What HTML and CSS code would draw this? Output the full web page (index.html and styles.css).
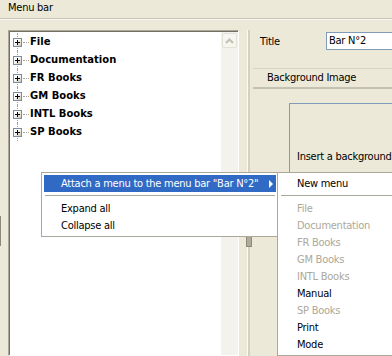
FILE: index.html
```html
<!DOCTYPE html>
<html>
<head>
<meta charset="utf-8">
<link rel="stylesheet" href="styles.css">
</head>
<body>
<div class="win">
  <div class="caption">Menu bar</div>
  <div class="main">
    <div class="gutter"><div class="grip"></div></div>
    <div class="tree-panel">
      <div class="tree">
        <div class="node"><span class="pb"></span><span class="dash"></span><span class="lbl">File</span></div>
        <div class="node"><span class="pb"></span><span class="dash"></span><span class="lbl">Documentation</span></div>
        <div class="node"><span class="pb"></span><span class="dash"></span><span class="lbl">FR Books</span></div>
        <div class="node"><span class="pb"></span><span class="dash"></span><span class="lbl">GM Books</span></div>
        <div class="node"><span class="pb"></span><span class="dash"></span><span class="lbl">INTL Books</span></div>
        <div class="node"><span class="pb"></span><span class="dash"></span><span class="lbl">SP Books</span></div>
      </div>
      <div class="vscroll">
        <div class="sb-up"><svg width="9" height="6" viewBox="0 0 9 6"><path d="M1 5 L4.5 1.5 L8 5" fill="none" stroke="#c3c0b4" stroke-width="2"/></svg></div>
      </div>
    </div>
    <div class="splitter"><div class="split-line"></div><div class="split-thumb"></div></div>
    <div class="props">
      <div class="title-row"><span class="field-label">Title</span><div class="input">Bar N°2</div></div>
      <div class="section">Background Image</div>
      <div class="imgbox"><div class="imgtext">Insert a background image</div></div>
    </div>
  </div>

  <div class="menu ctx">
    <div class="item active has-sub">Attach a menu to the menu bar "Bar N°2"</div>
    <div class="sep"></div>
    <div class="item">Expand all</div>
    <div class="item">Collapse all</div>
  </div>

  <div class="menu sub">
    <div class="item">New menu</div>
    <div class="sep"></div>
    <div class="item disabled">File</div>
    <div class="item disabled">Documentation</div>
    <div class="item disabled">FR Books</div>
    <div class="item disabled">GM Books</div>
    <div class="item disabled">INTL Books</div>
    <div class="item">Manual</div>
    <div class="item disabled">SP Books</div>
    <div class="item">Print</div>
    <div class="item">Mode</div>
  </div>
</div>
</body>
</html>
```

FILE: styles.css
```css
html, body {
  margin: 0;
  padding: 0;
}
body {
  background: #ece9d8;
  font-family: "DejaVu Sans Condensed", "Liberation Sans", sans-serif;
  font-size: 11px;
  letter-spacing: -0.25px;
  color: #000;
}
.win {
  position: relative;
  width: 392px;
  height: 356px;
  overflow: hidden;
}
.caption {
  height: 18px;
  line-height: 16px;
  padding-left: 8px;
  border-bottom: 1px solid #c9c6b6;
  box-shadow: 0 1px 0 #f7f6f0;
}
.main {
  display: flex;
  margin-top: 11px;
  height: 326px;
}
.gutter {
  width: 8px;
  flex: none;
}
.grip {
  margin-top: 186px;
  width: 1px;
  height: 30px;
  background: #8c897b;
}
.tree-panel {
  width: 231px;
  flex: none;
  box-sizing: border-box;
  display: flex;
  border: 1px solid;
  border-color: #aca899 #fff #fff #aca899;
  box-shadow: inset 1px 1px 0 #716f64;
  padding: 1px 0 0 1px;
}
.tree {
  width: 211px;
  background: #fff;
  padding-top: 1px;
  font-family: "DejaVu Sans", sans-serif;
  font-size: 10px;
  letter-spacing: 0;
  font-weight: bold;
}
.node {
  display: flex;
  align-items: center;
  height: 18px;
  line-height: 18px;
  position: relative;
}
.node::before {
  content: "";
  position: absolute;
  left: 7px;
  top: 0;
  bottom: 0;
  border-left: 1px dotted #a3a3a3;
}
.pb {
  position: relative;
  z-index: 1;
  width: 9px;
  height: 9px;
  box-sizing: border-box;
  margin-left: 3px;
  border: 1px solid #7f8d9a;
  background: linear-gradient(135deg, #ffffff 35%, #c9c5b6);
}
.pb::before {
  content: "";
  position: absolute;
  left: 1px;
  top: 3px;
  width: 5px;
  height: 1px;
  background: #000;
}
.pb::after {
  content: "";
  position: absolute;
  left: 3px;
  top: 1px;
  width: 1px;
  height: 5px;
  background: #000;
}
.dash {
  width: 6px;
  margin-left: 1px;
  border-top: 1px dotted #a3a3a3;
}
.lbl {
  margin-left: 1px;
}
.vscroll {
  width: 17px;
  background: #f3f2ec;
}
.sb-up {
  box-sizing: border-box;
  width: 15px;
  height: 15px;
  margin: 1px 1px 0 1px;
  border: 1px solid #e3e0d4;
  border-radius: 2px;
  background: #f7f6f1;
  display: flex;
  align-items: center;
  justify-content: center;
}
.splitter {
  width: 14px;
  flex: none;
  position: relative;
  display: flex;
  flex-direction: column;
}
.split-line {
  position: absolute;
  left: 8px;
  top: 0;
  bottom: 0;
  width: 2px;
  border-left: 1px solid #fbfaf6;
  background: #d4d1c2;
}
.split-thumb {
  position: relative;
  margin-top: 202px;
  margin-left: 7px;
  width: 6px;
  height: 15px;
  box-sizing: border-box;
  background: #aeab9c;
  border: 1px solid #8d8a7c;
}
.props {
  flex: 1;
  min-width: 0;
  padding-top: 2px;
}
.title-row {
  display: flex;
  align-items: center;
  height: 18px;
}
.field-label {
  width: 73px;
  padding-left: 7px;
  box-sizing: border-box;
  flex: none;
}
.input {
  flex: none;
  width: 120px;
  height: 18px;
  box-sizing: border-box;
  border: 1px solid #7f9db9;
  background: #fff;
  padding-left: 2px;
  line-height: 16px;
  white-space: nowrap;
}
.section {
  margin-top: 18px;
  height: 18px;
  line-height: 18px;
  padding-left: 14px;
  border-top: 1px solid #d8d5c8;
  border-bottom: 2px solid #c5c2b3;
  white-space: nowrap;
}
.imgbox {
  margin: 14px 0 0 36px;
  width: 200px;
  height: 150px;
  border: 1px solid #7f9db9;
  box-sizing: border-box;
}
.imgtext {
  padding: 44px 0 0 7px;
  line-height: 18px;
  white-space: nowrap;
}
.menu {
  position: absolute;
  box-sizing: border-box;
  background: #fff;
  border: 1px solid #aca899;
  padding: 2px 1px 2px 2px;
  white-space: nowrap;
}
.ctx {
  left: 41px;
  top: 172px;
  width: 237px;
}
.sub {
  left: 277px;
  top: 172px;
  width: 130px;
}
.item {
  position: relative;
  height: 17px;
  line-height: 17px;
  padding-left: 17px;
}
.item.active {
  background: #316ac5;
  color: #fff;
}
.item.disabled {
  color: #aca899;
}
.has-sub::after {
  content: "";
  position: absolute;
  right: 3px;
  top: 5px;
  border-left: 4px solid #fff;
  border-top: 4px solid transparent;
  border-bottom: 4px solid transparent;
}
.sep {
  height: 1px;
  margin: 3px 1px 4px 1px;
  background: #aca899;
}
```
